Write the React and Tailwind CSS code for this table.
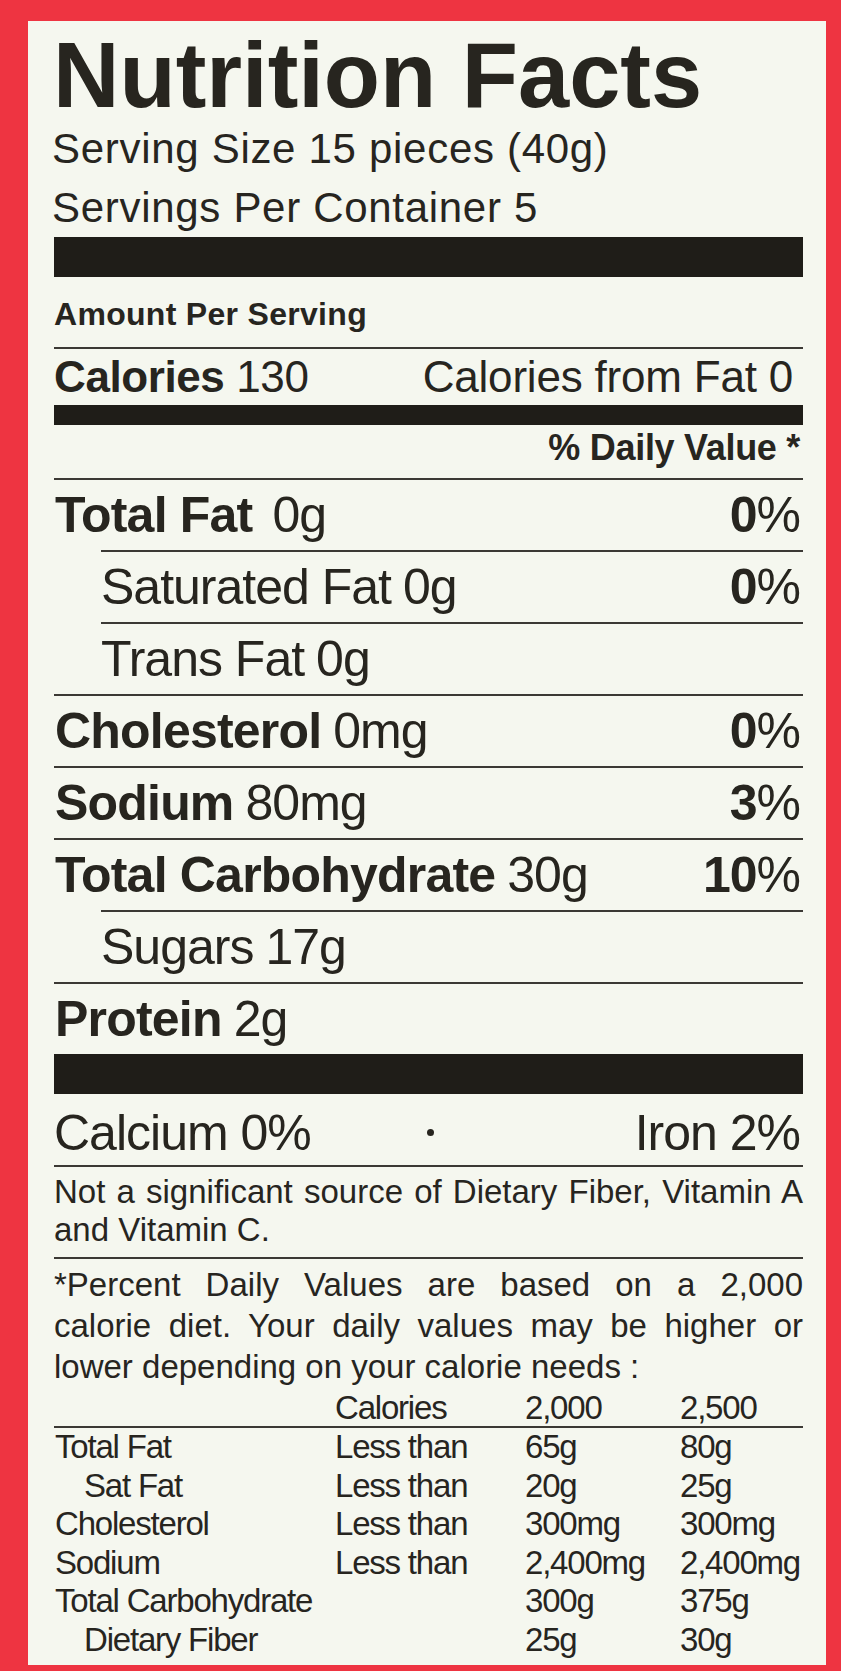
const nutrients = [
  { name: "Total Fat", amount: "0g", pct: "0", rule: "indent", gap: true },
  { name: "Saturated Fat", amount: "0g", pct: "0", sub: true, rule: "indent" },
  { name: "Trans Fat", amount: "0g", sub: true, rule: "full" },
  { name: "Cholesterol", amount: "0mg", pct: "0", rule: "full" },
  { name: "Sodium", amount: "80mg", pct: "3", rule: "full" },
  { name: "Total Carbohydrate", amount: "30g", pct: "10", rule: "indent" },
  { name: "Sugars", amount: "17g", sub: true, rule: "full" },
  { name: "Protein", amount: "2g" },
];

const dailyRows = [
  { label: "Total Fat", kind: "Less than", a: "65g", b: "80g" },
  { label: "Sat Fat", kind: "Less than", a: "20g", b: "25g", sub: true },
  { label: "Cholesterol", kind: "Less than", a: "300mg", b: "300mg" },
  { label: "Sodium", kind: "Less than", a: "2,400mg", b: "2,400mg" },
  { label: "Total Carbohydrate", kind: "", a: "300g", b: "375g" },
  { label: "Dietary Fiber", kind: "", a: "25g", b: "30g", sub: true },
];

const Rule = ({ indent }) => (
  <div className={indent ? "ml-[47px] h-[2px] bg-[#3b3934]" : "h-[2px] bg-[#3b3934]"} />
);

const NutrientRow = ({ item }) => (
  <>
    <div className="flex h-[70px] items-center justify-between text-[50px] leading-[50px] tracking-[-1px]">
      <div className={item.sub ? "pl-[47px]" : "pl-[1px]"}>
        {item.sub ? (
          <span>{item.name}</span>
        ) : (
          <span className="font-bold tracking-[-0.8px]">{item.name}</span>
        )}
        <span className={item.gap ? "ml-[20px]" : "ml-[12px]"}>{item.amount}</span>
      </div>
      {item.pct && (
        <div className="pr-[3px]">
          <span className="font-bold">{item.pct}</span>%
        </div>
      )}
    </div>
    {item.rule === "indent" && <Rule indent />}
    {item.rule === "full" && <Rule />}
  </>
);

export default function App() {
  return (
    <div className="h-[1671px] w-[841px] bg-[#ee3441] pt-[21px] pr-[15px] pb-[6px] pl-[28px] text-[#27251f] [font-family:'Liberation_Sans',Arial,sans-serif]">
      <div className="h-full bg-[#f5f7ef] pr-[23px] pl-[26px]">
        {/* header */}
        <h1 className="-ml-[1px] pt-[10px] text-[92px] leading-[88px] font-bold">
          Nutrition Facts
        </h1>
        <div className="-ml-[2px] text-[42px] leading-[59px] tracking-[0.7px]">
          <div>Serving Size 15 pieces (40g)</div>
          <div>Servings Per Container 5</div>
        </div>
        <div className="h-[40px] bg-[#1f1d18]" />

        <div className="h-[72px] border-b-2 border-[#3b3934] pt-[21px] text-[32px] leading-[32px] font-bold tracking-[0.3px]">
          Amount Per Serving
        </div>

        <div className="flex h-[56px] items-center justify-between text-[44px] leading-[44px]">
          <div className="tracking-[-0.4px]">
            <span className="font-bold">Calories</span> 130
          </div>
          <div className="pr-[10px] tracking-[-0.2px]">Calories from Fat 0</div>
        </div>
        <div className="h-[20px] bg-[#1f1d18]" />

        <div className="flex h-[55px] items-center justify-end border-b-2 border-[#3b3934] pr-[3px] pb-[8px] text-[36px] leading-[36px] font-bold tracking-[-0.3px]">
          % Daily Value *
        </div>

        {/* nutrients */}
        {nutrients.map((item) => (
          <NutrientRow key={item.name} item={item} />
        ))}
        <div className="h-[40px] bg-[#1f1d18]" />

        <div className="flex h-[71px] items-center pt-[6px] text-[50px] leading-[50px] tracking-[-1px]">
          <div className="flex-1">Calcium 0%</div>
          <div className="ml-[6px] h-[7px] w-[7px] rounded-full bg-[#27251f]" />
          <div className="flex-1 pr-[3px] text-right">Iron 2%</div>
        </div>
        <Rule />

        <div className="pt-[6px] pb-[8px] text-[33px] leading-[38px]">
          <div className="text-justify [text-align-last:justify]">
            Not a significant source of Dietary Fiber, Vitamin A
          </div>
          <div>and Vitamin C.</div>
        </div>
        <Rule />

        {/* footnote */}
        <div className="pt-[5px] text-[33px] leading-[41px]">
          <div className="text-justify [text-align-last:justify]">
            *Percent Daily Values are based on a 2,000
          </div>
          <div className="text-justify [text-align-last:justify]">
            calorie diet. Your daily values may be higher or
          </div>
          <div>lower depending on your calorie needs :</div>
        </div>

        <div className="text-[33px] tracking-[-1.2px]">
          <div className="grid grid-cols-[281px_190px_155px_1fr] border-b-2 border-[#3b3934] pt-[3px] leading-[36px]">
            <div />
            <div>Calories</div>
            <div>2,000</div>
            <div>2,500</div>
          </div>
          {dailyRows.map((r) => (
            <div key={r.label} className="grid grid-cols-[281px_190px_155px_1fr] leading-[38.5px]">
              <div className={r.sub ? "pl-[30px]" : "pl-[1px]"}>{r.label}</div>
              <div>{r.kind}</div>
              <div>{r.a}</div>
              <div>{r.b}</div>
            </div>
          ))}
        </div>
      </div>
    </div>
  );
}
